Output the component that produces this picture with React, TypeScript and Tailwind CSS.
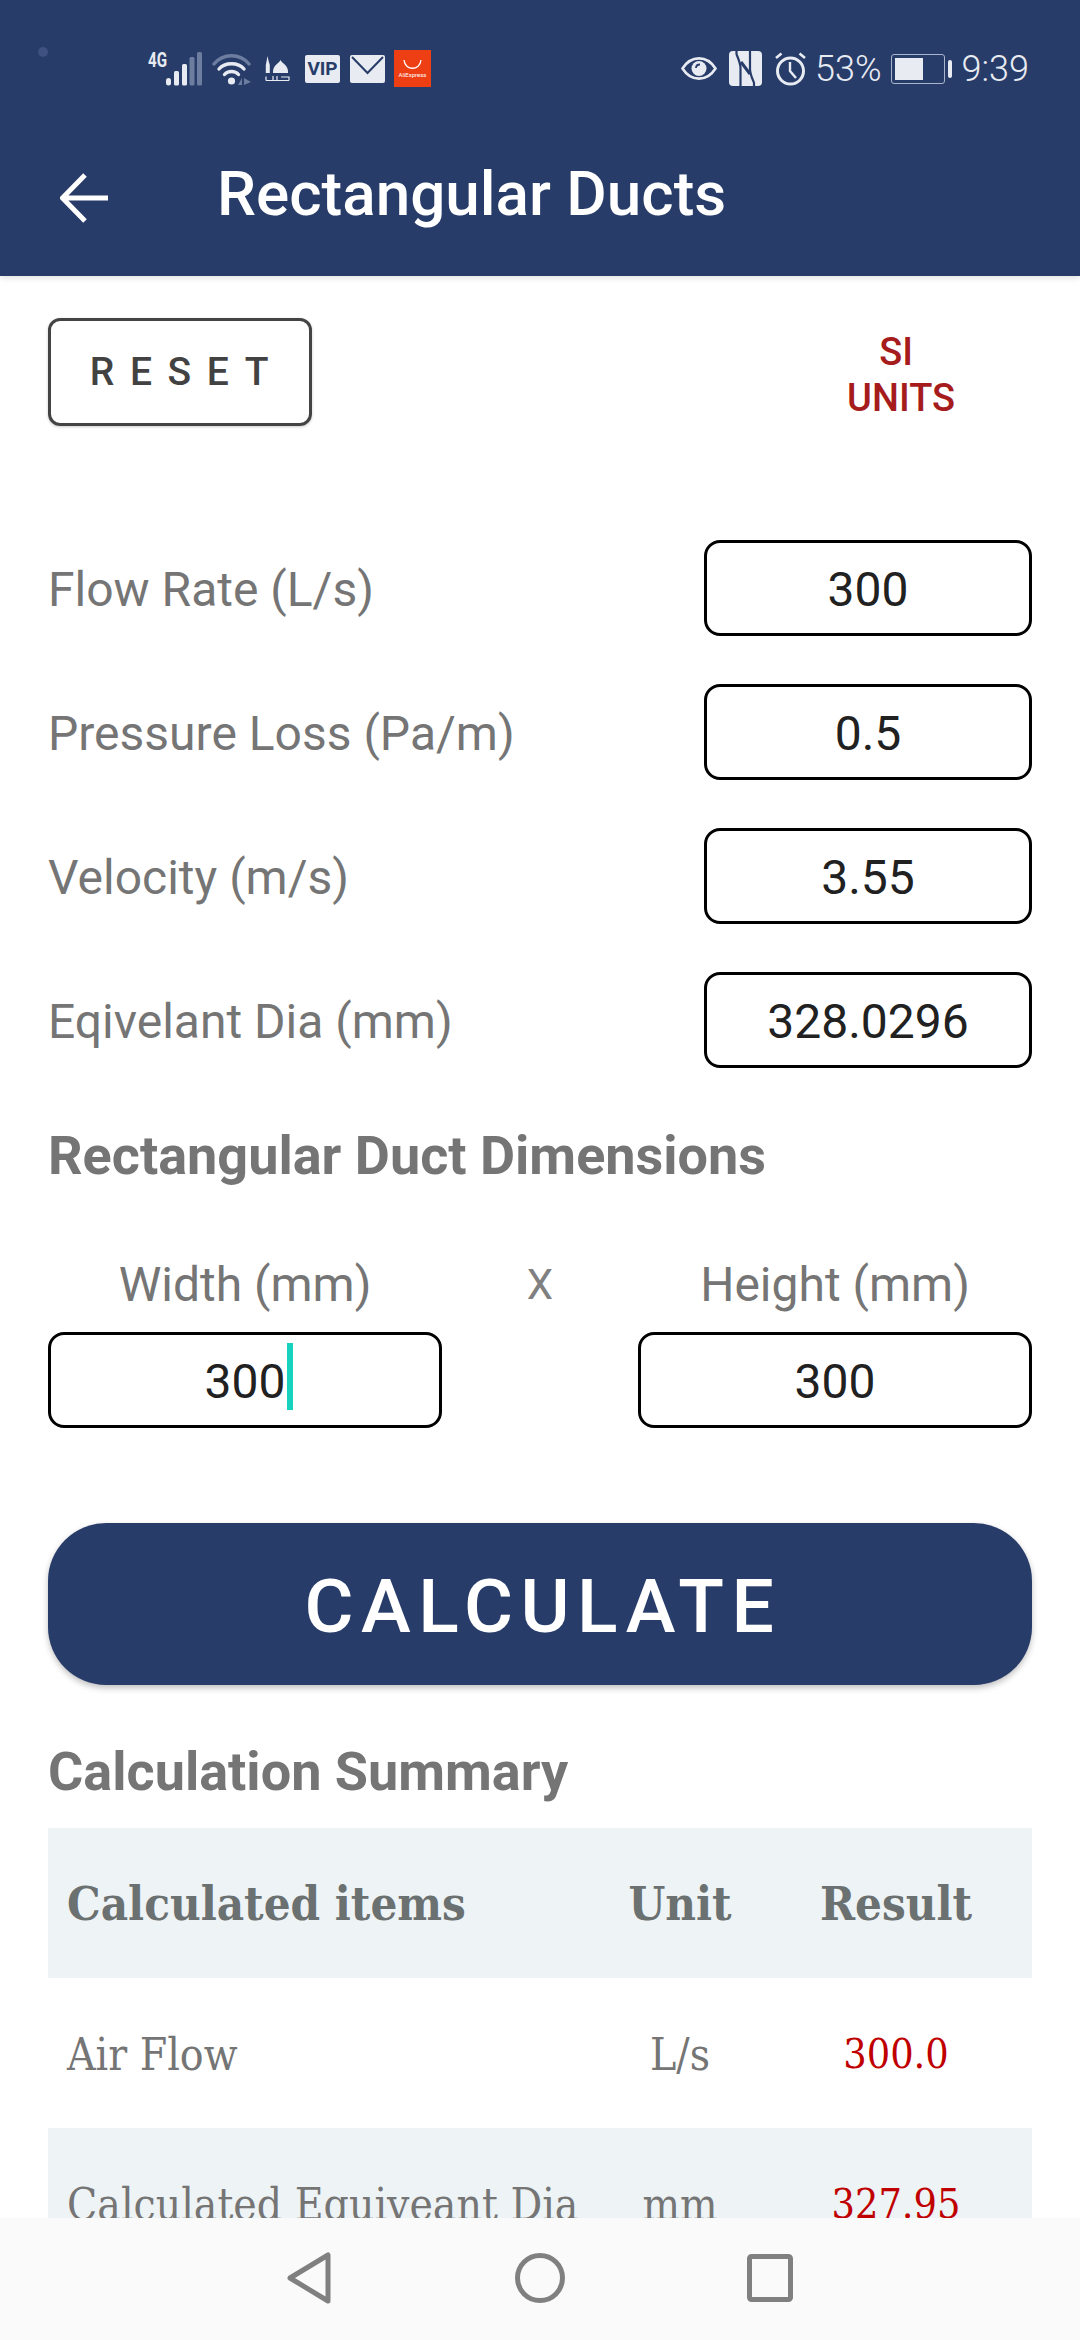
import React from 'react';

const fields = [
  { label: 'Flow Rate (L/s)', value: '300' },
  { label: 'Pressure Loss (Pa/m)', value: '0.5' },
  { label: 'Velocity (m/s)', value: '3.55' },
  { label: 'Eqivelant Dia (mm)', value: '328.0296' },
];

const rows = [
  { item: 'Air Flow', unit: 'L/s', result: '300.0', shaded: false },
  { item: 'Calculated Equiveant Dia', unit: 'mm', result: '327.95', shaded: true },
];

function SignalIcon() {
  return (
    <svg width="54" height="34" viewBox="0 0 54 34" className="mr-[10px] overflow-visible">
      <text x="0" y="15" fontFamily="Roboto, sans-serif" fontWeight="700" fontSize="20" fill="#e8ebf2" textLength="19" lengthAdjust="spacingAndGlyphs">4G</text>
      <rect x="18" y="26" width="5" height="7.5" rx="2.5" fill="#e8ebf2" />
      <rect x="26" y="19" width="5" height="14.5" rx="1.5" fill="#e8ebf2" />
      <rect x="34" y="12" width="5" height="21.5" rx="1.5" fill="#e8ebf2" />
      <rect x="41.5" y="5" width="5" height="28.5" rx="1.5" fill="#6d7d9f" />
      <rect x="49" y="0" width="5" height="33.5" rx="1.5" fill="#6d7d9f" />
    </svg>
  );
}

function WifiIcon() {
  return (
    <svg width="40" height="34" viewBox="0 0 40 34" fill="none" className="mr-[13px]">
      <path d="M2 12 C11 1 28 1 37 12" stroke="#6d7d9f" strokeWidth="3.4" strokeLinecap="round" />
      <path d="M7 17 C13 10 26 10 32 17" stroke="#e8ebf2" strokeWidth="3.4" strokeLinecap="round" />
      <path d="M12.5 22.5 C16 18.5 23 18.5 26.5 22.5" stroke="#e8ebf2" strokeWidth="3.4" strokeLinecap="round" />
      <circle cx="19.5" cy="29" r="3.6" fill="#e8ebf2" />
      <path d="M30 33 L30 26 L26 33 Z M32 33 L32 26 L39 30 Z" fill="#6d7d9f" />
    </svg>
  );
}

function MosqueIcon() {
  return (
    <svg width="25" height="26" viewBox="0 0 25 26" fill="none" className="mr-[15px]">
      <path d="M2.5 0 L3.6 5 L4.8 9 L4.8 17 L0.8 17 L0.8 9 L1.6 5 Z" fill="#e8ebf2" />
      <path d="M15.5 4 C16.5 7 23 9 23 15.5 L23 17 L8 17 L8 15.5 C8 9 14.5 7 15.5 4 Z" fill="#e8ebf2" />
      <path d="M1 24.5 H24 M1 20.5 V24.5 M8 20 V24.5 M12 20 V24.5 M16 21 H24 V24.5" stroke="#e8ebf2" strokeWidth="1.2" />
    </svg>
  );
}

function VipIcon() {
  return (
    <div className="mr-[10px] flex h-[28px] w-[35px] items-center justify-center rounded-[2px] bg-[#e8ebf2] font-['Roboto',sans-serif] text-[19px] leading-none font-bold text-[#273c69]">
      VIP
    </div>
  );
}

function MailIcon() {
  return (
    <svg width="35" height="28" viewBox="0 0 35 28" fill="none" className="mr-[9px]">
      <rect width="35" height="28" rx="2" fill="#e8ebf2" />
      <path d="M2 2 L17.5 18 L33 2" stroke="#273c69" strokeWidth="2" />
    </svg>
  );
}

function AliIcon() {
  return (
    <div className="flex h-[37px] w-[37px] flex-col items-center bg-[#ee3f14] pt-[9px]">
      <svg width="19" height="11" viewBox="0 0 19 11" fill="none">
        <path d="M1 1 C2 12 17 12 18 1" stroke="#fff" strokeWidth="1.3" />
      </svg>
      <span className="mt-[1px] font-['Roboto',sans-serif] text-[6px] leading-[8px] text-white">AliExpress</span>
    </div>
  );
}

function EyeIcon() {
  return (
    <svg width="36" height="29" viewBox="0 0 36 29" fill="none" className="mr-[12px]">
      <path d="M1.5 14.5 C10 1 26 1 34.5 14.5 C26 28 10 28 1.5 14.5 Z" stroke="#e8ebf2" strokeWidth="2.6" />
      <circle cx="18" cy="14.5" r="7.5" fill="#e8ebf2" />
      <path d="M15 14 C15 12 16.5 10.5 19 10.5" stroke="#273c69" strokeWidth="1.8" />
    </svg>
  );
}

function NfcIcon() {
  return (
    <svg width="33" height="35" viewBox="0 0 33 35" fill="none" className="mr-[12px]">
      <rect width="33" height="35" rx="4" fill="#e8ebf2" />
      <path d="M7.5 0 V3 C7.5 4 11.5 11 11.5 17 V35" stroke="#273c69" strokeWidth="2.2" />
      <path d="M25 35 V32 C25 31 21 24 21 18 V0" stroke="#273c69" strokeWidth="2.2" />
      <path d="M12 11 L21 23" stroke="#273c69" strokeWidth="3" />
    </svg>
  );
}

function AlarmIcon() {
  return (
    <svg width="33" height="34" viewBox="0 0 33 34" fill="none" className="mr-[8px]">
      <circle cx="16.5" cy="19" r="13" stroke="#e8ebf2" strokeWidth="3" />
      <path d="M16 10 V19 L22 26" stroke="#e8ebf2" strokeWidth="2.4" />
      <path d="M2 6 L7.5 1.5 M31 6 L25.5 1.5" stroke="#e8ebf2" strokeWidth="2.6" />
    </svg>
  );
}

function BatteryIcon() {
  return (
    <div className="mr-[10px] ml-[9px] flex items-center gap-[3px]">
      <div className="h-[30px] w-[54px] rounded-[3px] border border-[#aab4cc] p-[3px]">
        <div className="h-full w-[28px] bg-[#e8ebf2]" />
      </div>
      <div className="h-[18px] w-[4px] rounded-[2px] bg-[#e8ebf2]" />
    </div>
  );
}

function Box({ value, className }: { value: React.ReactNode; className: string }) {
  return (
    <div className={`flex h-[96px] items-center justify-center rounded-[16px] border-[3px] border-black pt-[3px] text-[48px] text-[#212121] ${className}`}>
      {value}
    </div>
  );
}

export default function App() {
  return (
    <div className="flex h-[2340px] w-[1080px] flex-col overflow-hidden bg-white font-['Roboto',sans-serif]">
      <header className="relative z-10 h-[276px] shrink-0 bg-[#273c69] pt-[50px] shadow-[0_2px_6px_rgba(0,0,0,0.12)]">
        <div className="relative flex h-[37px] items-center justify-between pr-[51px] pl-[148px]">
          <div className="absolute top-[-3px] left-[38px] h-[10px] w-[10px] rounded-full bg-[#3e5180]" />
          <div className="flex items-center">
            <SignalIcon />
            <WifiIcon />
            <MosqueIcon />
            <VipIcon />
            <MailIcon />
            <AliIcon />
          </div>
          <div className="flex items-center text-[36px] leading-none font-light text-[#e8ebf2]">
            <EyeIcon />
            <NfcIcon />
            <AlarmIcon />
            <span>53%</span>
            <BatteryIcon />
            <span>9:39</span>
          </div>
        </div>
        <div className="mt-[38px] flex h-[146px] items-center pl-[60px]">
          <svg width="48" height="50" viewBox="0 0 48 50" fill="none" className="mr-[109px]">
            <path d="M48 25 H3 M25 2 L2.5 25 L25 48" stroke="#fff" strokeWidth="5" />
          </svg>
          <h1 className="-mt-[8px] text-[62px] leading-none font-medium text-white">Rectangular Ducts</h1>
        </div>
      </header>

      <main className="min-h-0 flex-1 overflow-hidden px-[48px]">
        <div className="mt-[42px] flex items-start justify-between">
          <div className="flex h-[108px] w-[264px] items-center justify-center rounded-[12px] border-[3px] border-[#444] pl-[14px] text-[39px] font-medium tracking-[0.4em] text-[#424242] shadow-[0_1px_3px_rgba(0,0,0,0.2)]">
            RESET
          </div>
          <div className="mt-[11px] mr-[77px] flex flex-col items-center text-[38px] leading-[46px] font-medium text-[#a61c1c]">
            <span className="pr-[10px]">SI</span>
            <span>UNITS</span>
          </div>
        </div>

        <div className="mt-[114px] flex flex-col gap-[48px]">
          {fields.map((f) => (
            <div key={f.label} className="flex items-center justify-between">
              <span className="pt-[3px] text-[48px] text-[#757575]">{f.label}</span>
              <Box value={f.value} className="w-[328px]" />
            </div>
          ))}
        </div>

        <h2 className="mt-[58px] text-[54px] leading-[60px] font-bold text-[#757575]">Rectangular Duct Dimensions</h2>

        <div className="mt-[72px] flex items-start justify-between">
          <div className="w-[394px]">
            <div className="mb-[20px] text-center text-[48px] leading-[54px] text-[#757575]">Width (mm)</div>
            <Box
              className="w-full"
              value={
                <span className="relative">
                  300
                  <span className="absolute top-[-3px] right-[-8px] h-[67px] w-[6px] bg-[#17d2bd]" />
                </span>
              }
            />
          </div>
          <div className="text-[42px] leading-[54px] text-[#808080]">X</div>
          <div className="w-[394px]">
            <div className="mb-[20px] text-center text-[48px] leading-[54px] text-[#757575]">Height (mm)</div>
            <Box value="300" className="w-full" />
          </div>
        </div>

        <button className="mt-[95px] flex h-[162px] w-full items-center justify-center rounded-[58px] bg-[#273c69] pt-[4px] pl-[6px] text-[75px] font-medium tracking-[0.1em] text-white shadow-[0_3px_6px_rgba(0,0,0,0.25)]">
          CALCULATE
        </button>

        <h2 className="mt-[57px] text-[54px] leading-[60px] font-bold text-[#757575]">Calculation Summary</h2>

        <div className="mt-[26px] font-['DejaVu_Serif_Condensed','DejaVu_Serif',serif]">
          <div className="grid h-[150px] grid-cols-[522px_220px_212px] items-center bg-[#eef3f6] pt-[3px] text-[47px] font-bold text-[#6b7070]">
            <span className="pl-[19px]">Calculated items</span>
            <span className="text-center">Unit</span>
            <span className="text-center">Result</span>
          </div>
          {rows.map((r) => (
            <div
              key={r.item}
              className={`grid h-[150px] grid-cols-[522px_220px_212px] items-center pt-[3px] text-[44px] text-[#757575] ${r.shaded ? 'bg-[#eef3f6]' : 'bg-white'}`}
            >
              <span className="pl-[19px] whitespace-nowrap">{r.item}</span>
              <span className="text-center">{r.unit}</span>
              <span className="text-center text-[41px] text-[#c00000]">{r.result}</span>
            </div>
          ))}
        </div>
      </main>

      <nav className="flex h-[122px] shrink-0 items-center justify-center bg-[#fafafa]">
        <svg width="44" height="52" viewBox="0 0 44 52" fill="none" className="mr-[184px] -translate-y-[1px]">
          <path d="M41 3 V49 L3 26 Z" stroke="#808080" strokeWidth="5" strokeLinejoin="round" />
        </svg>
        <svg width="50" height="52" viewBox="0 0 50 52" fill="none" className="mr-[182px] -translate-y-[1px]">
          <circle cx="25" cy="26" r="22.5" stroke="#808080" strokeWidth="5" />
        </svg>
        <svg width="46" height="48" viewBox="0 0 46 48" fill="none" className="-translate-y-[1px]">
          <rect x="2.5" y="2.5" width="41" height="43" rx="2" stroke="#808080" strokeWidth="5" />
        </svg>
      </nav>
    </div>
  );
}
